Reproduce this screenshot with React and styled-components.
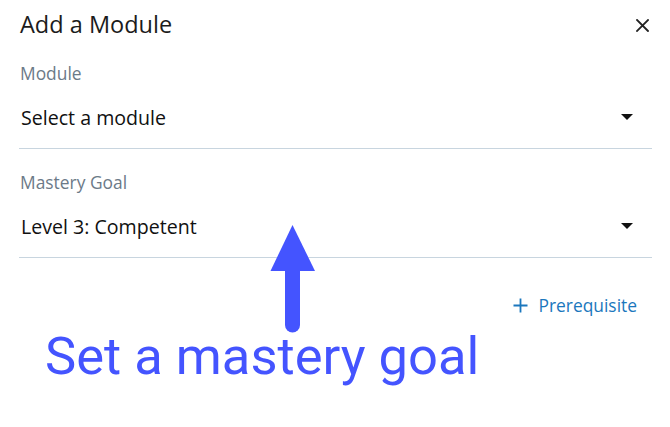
import React from "react";
import styled, { createGlobalStyle } from "styled-components";

const Global = createGlobalStyle`
  html, body { margin: 0; padding: 0; background: #ffffff; }
  body { font-family: "Open Sans", "Liberation Sans", sans-serif; }
  * { box-sizing: border-box; }
`;

const Page = styled.div`
  position: relative;
  width: 670px;
  height: 427px;
  padding: 8px 18px 0 19px;
  background: #ffffff;
  overflow: hidden;
`;

const Header = styled.div`
  display: flex;
  align-items: center;
  justify-content: space-between;
  height: 32px;
`;

const Title = styled.h1`
  margin: 0 0 0 1px;
  font-size: 23.5px;
  line-height: 32px;
  font-weight: 400;
  color: #1b1b1b;
`;

const CloseButton = styled.button`
  display: flex;
  align-items: center;
  justify-content: center;
  width: 20px;
  height: 20px;
  padding: 0;
  border: none;
  background: none;
  color: #222222;
  cursor: pointer;
  transform: translateY(1px);
`;

const Field = styled.div`
  padding-top: 21px;
  border-bottom: 1px solid #c8d5df;
`;

const Label = styled.div`
  margin-left: 1px;
  font-size: 17.4px;
  line-height: 24px;
  color: #6c7a88;
`;

const SelectRow = styled.div`
  display: flex;
  align-items: center;
  justify-content: space-between;
  padding: 20px 19px 17px 2px;
`;

const SelectValue = styled.span`
  font-size: 19.6px;
  line-height: 26px;
  color: #111111;
`;

const Caret = styled.span`
  width: 0;
  height: 0;
  border-left: 6px solid transparent;
  border-right: 6px solid transparent;
  border-top: 6px solid #111111;
  transform: translateY(-1px);
`;

const ActionRow = styled.div`
  display: flex;
  justify-content: flex-end;
  padding: 35px 15px 0 0;
`;

const LinkButton = styled.button`
  display: flex;
  align-items: center;
  gap: 10px;
  padding: 0;
  border: none;
  background: none;
  font-family: "Open Sans", "Liberation Sans", sans-serif;
  font-size: 17.4px;
  line-height: 24px;
  color: #1b77bd;
  cursor: pointer;
`;

const Annotation = styled.div`
  margin: 7px 0 0 26px;
  font-family: Roboto, "Liberation Sans", sans-serif;
  font-size: 52.5px;
  line-height: 64px;
  color: #4454ff;
  white-space: nowrap;
`;

const ArrowOverlay = styled.svg`
  position: absolute;
  left: 270px;
  top: 225px;
`;

function SelectField({ label, value }) {
  return (
    <Field>
      <Label>{label}</Label>
      <SelectRow>
        <SelectValue>{value}</SelectValue>
        <Caret />
      </SelectRow>
    </Field>
  );
}

export default function App() {
  return (
    <>
      <Global />
      <Page>
        <Header>
          <Title>Add a Module</Title>
          <CloseButton aria-label="Close">
            <svg width="13" height="13" viewBox="0 0 13 13">
              <path d="M1 1 L12 12 M12 1 L1 12" stroke="#222" strokeWidth="1.8" strokeLinecap="square" fill="none" />
            </svg>
          </CloseButton>
        </Header>
        <SelectField label="Module" value="Select a module" />
        <SelectField label="Mastery Goal" value="Level 3: Competent" />
        <ActionRow>
          <LinkButton>
            <svg width="15" height="15" viewBox="0 0 15 15">
              <path d="M7.5 0.5 V14.5 M0.5 7.5 H14.5" stroke="#1b77bd" strokeWidth="1.8" fill="none" />
            </svg>
            Prerequisite
          </LinkButton>
        </ActionRow>
        <Annotation>Set a mastery goal</Annotation>
        <ArrowOverlay width="46" height="108" viewBox="0 0 46 108">
          <path d="M22.5 0 L0.5 46 L45 46 Z" fill="#4454ff" />
          <path d="M15 44 H30 V100 A7.5 7.5 0 0 1 15 100 Z" fill="#4454ff" />
        </ArrowOverlay>
      </Page>
    </>
  );
}
